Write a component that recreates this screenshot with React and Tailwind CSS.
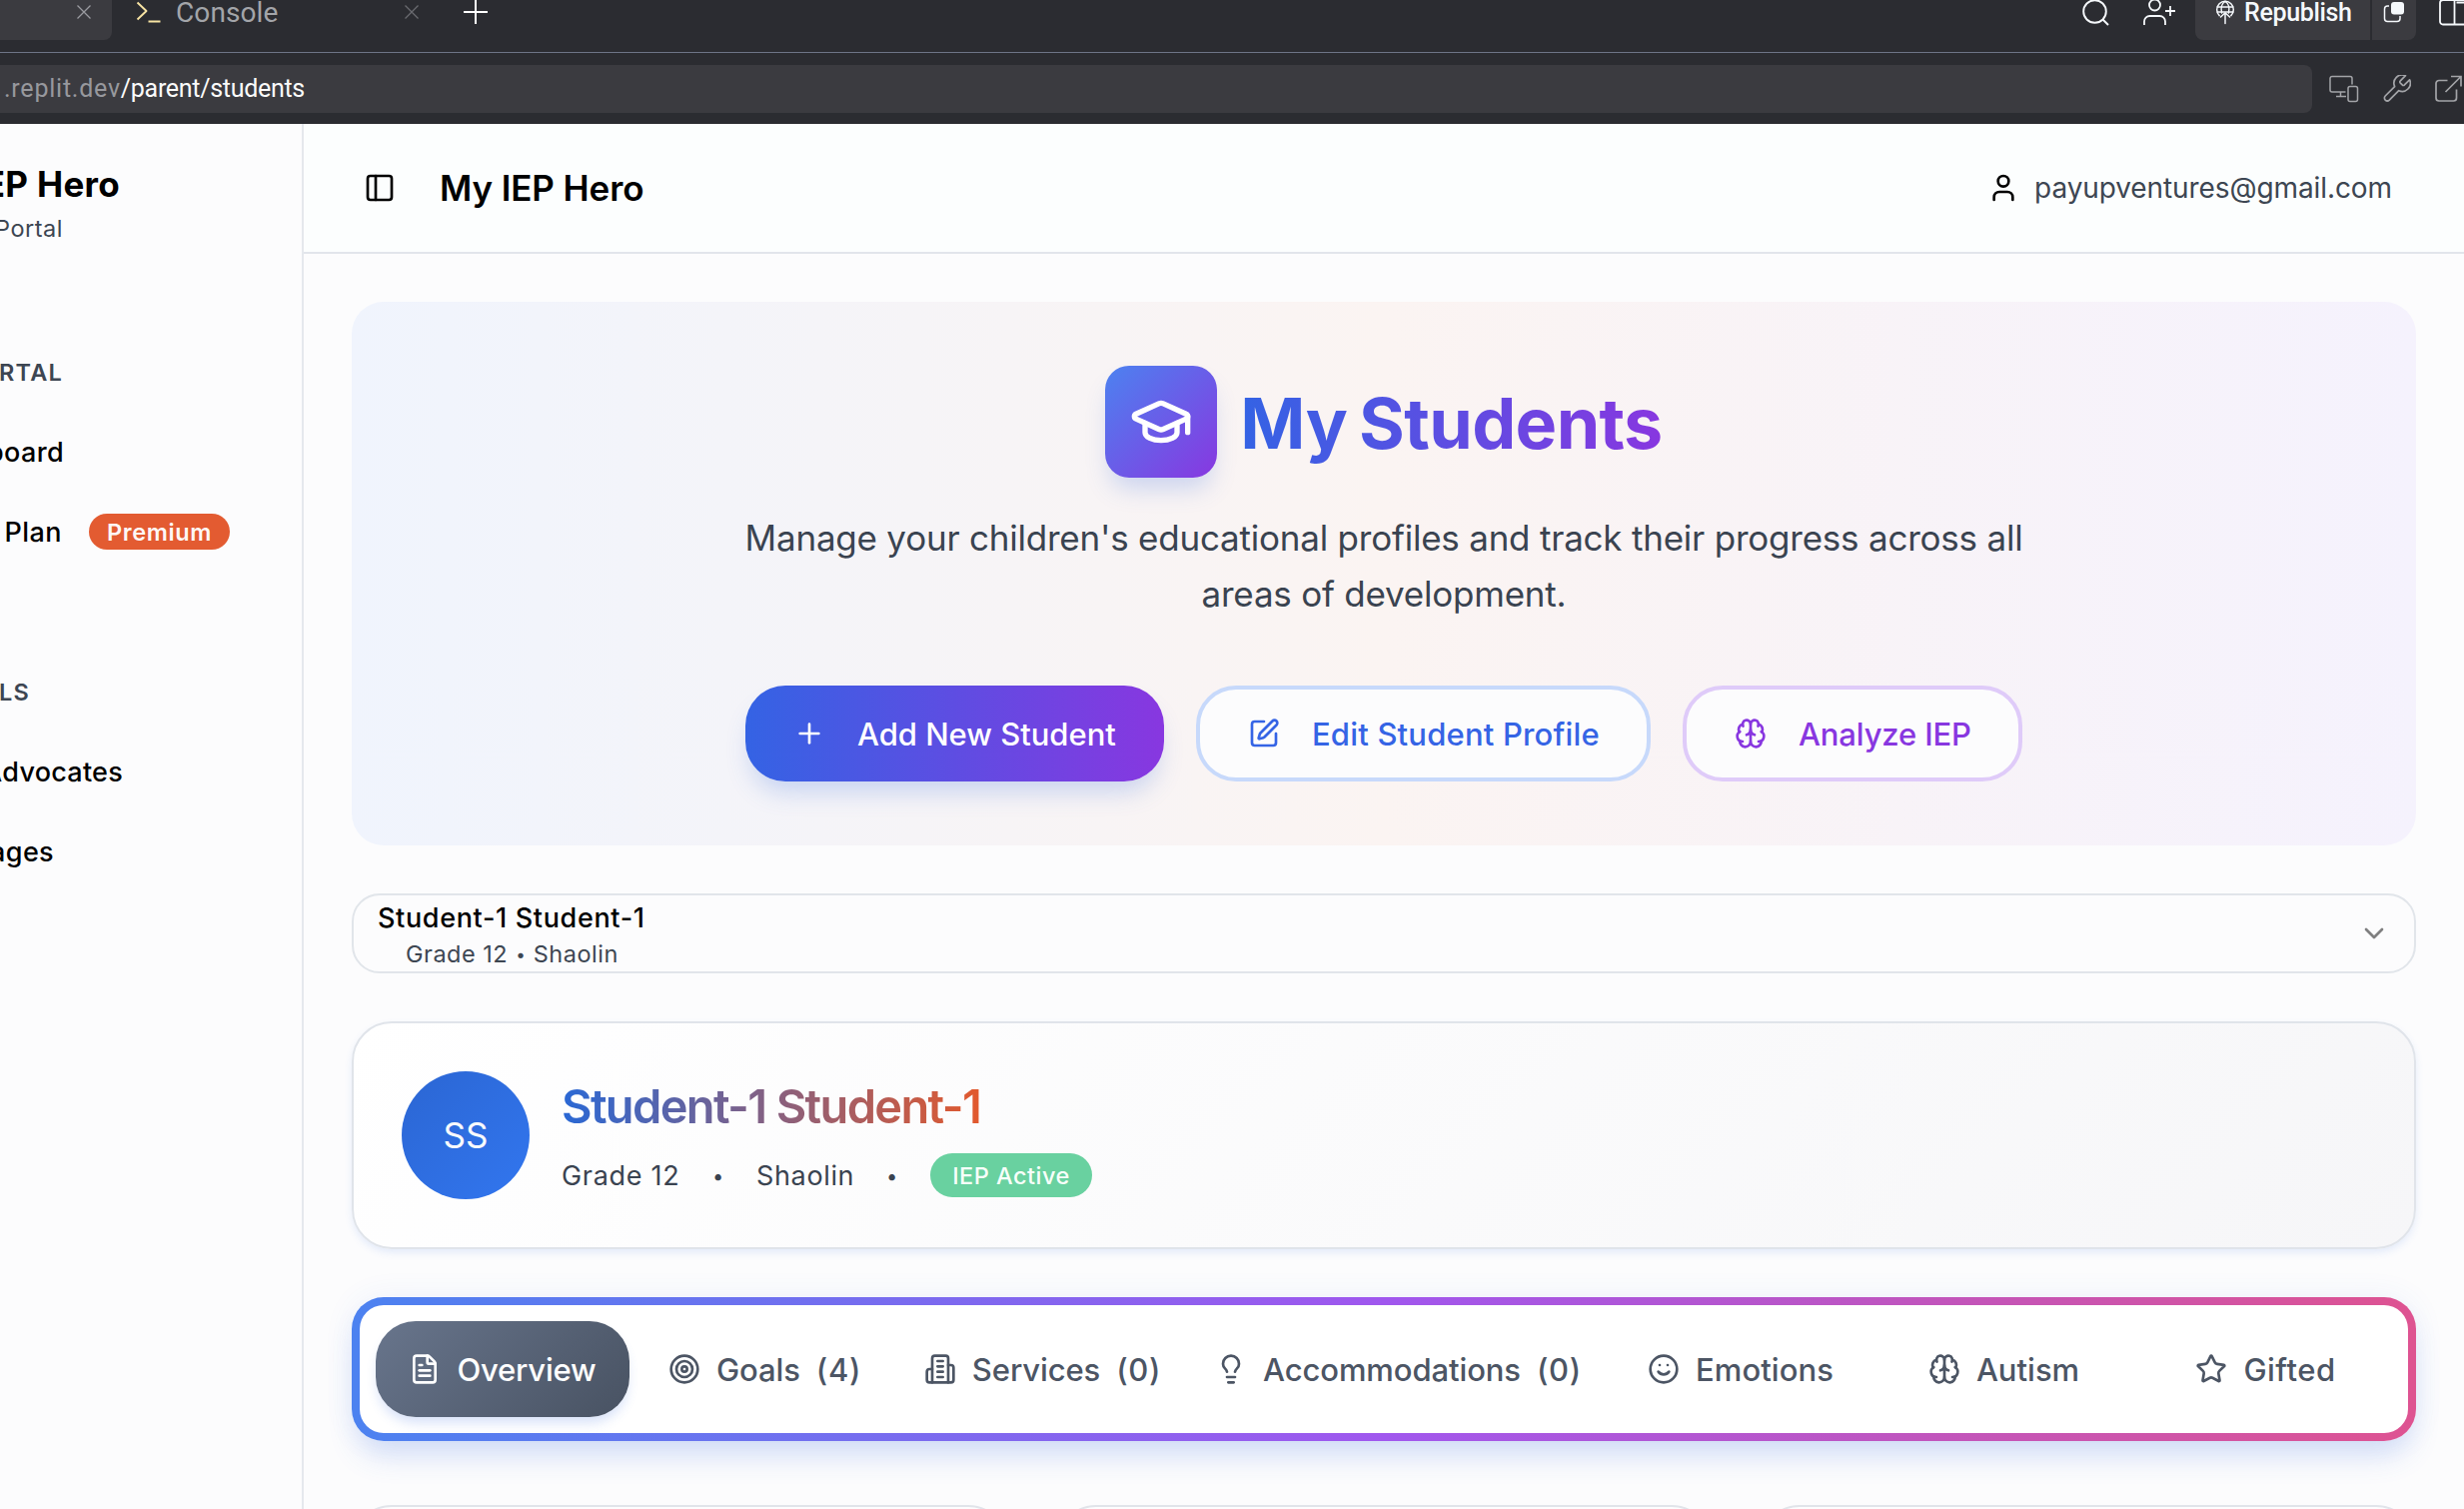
import React from "react";
import {
  Brain,
  Building2,
  ChevronDown,
  FileText,
  GraduationCap,
  Lightbulb,
  PanelLeft,
  Plus,
  Smile,
  SquarePen,
  Star,
  Target,
  User,
} from "lucide-react";

function CloseGlyph({ className }) {
  return (
    <svg className={className} width="16" height="16" viewBox="0 0 16 16" fill="none" stroke="currentColor" strokeWidth="1.3">
      <path d="M1.5 1.5l13 13M14.5 1.5l-13 13" />
    </svg>
  );
}

function PromptGlyph() {
  return (
    <svg className="text-[#f7e3a3]" width="26" height="24" viewBox="0 0 26 24" fill="none" stroke="currentColor" strokeWidth="1.9" strokeLinejoin="round">
      <path d="M1.500 2.500l9 8.500-9 8.500M12.500 21.500h12" />
    </svg>
  );
}

function GlobeUpload() {
  return (
    <svg width="20" height="26" viewBox="0 0 20 26" fill="none" stroke="currentColor" strokeWidth="1.5" strokeLinecap="round" strokeLinejoin="round">
      <path d="M4.2 16.6A8.3 8.3 0 1 1 15.8 16.6" />
      <path d="M2.2 8h15.6M2.2 13h15.6" />
      <path d="M6.6 14C5.4 9.5 6.4 4.500 10 2.300c3.600 2.200 4.600 7.200 3.400 11.700" />
      <path d="M10 14v10.500M5.500 18l4.500-4.200 4.500 4.200" />
    </svg>
  );
}

function DeploymentsGlyph() {
  return (
    <svg width="22" height="22" viewBox="0 0 22 22" fill="none" stroke="currentColor" strokeWidth="1.5">
      <path d="M6 5H4.500A3 3 0 0 0 1.500 8v9.500a3 3 0 0 0 3 3H14a3 3 0 0 0 3-3V15" />
      <rect x="8" y="1" width="13" height="12.500" rx="3" fill="currentColor" stroke="none" />
    </svg>
  );
}

function BrowserTabs() {
  return (
    <div className="h-10 overflow-hidden">
      <div className="-mt-4 flex h-14 items-center">
        <div className="flex h-14 w-28 items-center justify-end rounded-br-lg bg-[#3b3b40] pr-5 text-[#9a9ba0]">
          <CloseGlyph />
        </div>
        <div className="ml-6 flex items-center">
          <PromptGlyph />
          <span className="ml-3.5 pt-px text-[28px] tracking-[0.1px] text-[#a3a5a9]">Console</span>
          <CloseGlyph className="ml-[126px] text-[#6a6b70]" />
        </div>
        <svg className="ml-11 text-white" width="24" height="24" viewBox="0 0 24 24" stroke="currentColor" strokeWidth="2">
          <path d="M12 0v24M0 12h24" />
        </svg>
        <div className="ml-auto flex items-center text-[#f5f8fb]">
          <svg width="28" height="28" viewBox="0 0 28 28" fill="none" stroke="currentColor" strokeWidth="1.9">
            <circle cx="12.500" cy="13.500" r="11.300" />
            <path d="M20.500 21.500l5.500 5.500" />
          </svg>
          <svg className="ml-8" width="34" height="28" viewBox="0 0 34 28" fill="none" stroke="currentColor" strokeWidth="1.8">
            <circle cx="12.500" cy="7" r="5.500" />
            <path d="M2 27v-3.500a5.500 5.500 0 0 1 5.500-5.500h10a5.500 5.500 0 0 1 5.500 5.500V27M23 13h10M28 8v10" />
          </svg>
          <div className="ml-[19px] flex h-14 w-[175px] items-center rounded-bl-lg bg-[#3b3b40] pl-5">
            <GlobeUpload />
            <span className="ml-[9px] pt-0.5 text-[25px] font-medium tracking-[-0.35px]">Republish</span>
          </div>
          <div className="ml-0.5 flex h-14 w-11 items-center justify-center rounded-br-lg bg-[#3b3b40]">
            <DeploymentsGlyph />
          </div>
          <svg className="ml-[23px]" width="25" height="28" viewBox="0 0 25 28" fill="none" stroke="currentColor" strokeWidth="1.8">
            <path d="M30 2H4a3 3 0 0 0-3 3v18.500a3 3 0 0 0 3 3h26M15.500 2v24.500M17.500 4.500h8" />
          </svg>
        </div>
      </div>
    </div>
  );
}

function AddressBar() {
  return (
    <div className="flex h-[71px] items-center">
      <div className="flex h-12 w-[2314px] items-center rounded-r-lg bg-[#3b3b40] pt-px pl-1 text-[25px]">
        <span className="tracking-[0.77px] text-[#97989d]">.replit.dev</span>
        <span className="tracking-[-0.3px] text-[#fafafa]">/parent/students</span>
      </div>
      <div className="ml-[17px] flex items-center gap-6 text-[#a3a4a8]">
        <svg width="30" height="28" viewBox="0 0 30 28" fill="none" stroke="currentColor" strokeWidth="1.5">
          <path d="M23 9.500V3.500a2 2 0 0 0-2-2H3a2 2 0 0 0-2 2V15a2 2 0 0 0 2 2h13.500M11.500 17v4.500M7 21.500h10" />
          <rect x="19" y="11.500" width="9.500" height="15" rx="2" />
        </svg>
        <svg width="28" height="28" viewBox="2 2 20.500 20.500" fill="none" stroke="currentColor" strokeWidth="1.250" strokeLinejoin="round">
          <path d="M14.7 6.3a1 1 0 0 0 0 1.6l1.400 1.400a1 1 0 0 0 1.600 0l3.770-3.770a6 6 0 0 1-7.940 7.940l-6.910 6.910a2.120 2.120 0 0 1-3-3l6.910-6.910a6 6 0 0 1 7.940-7.940l-3.760 3.760z" />
        </svg>
        <svg width="28" height="28" viewBox="0 0 28 28" fill="none" stroke="currentColor" strokeWidth="1.700">
          <path d="M12.500 5.500H4a3 3 0 0 0-3 3V23a3 3 0 0 0 3 3h14.500a3 3 0 0 0 3-3v-8.500M10.500 17L25.500 2M16 1.500h10v10" />
        </svg>
      </div>
    </div>
  );
}

function Clipped({ className, children }) {
  return <div className={`flex items-center justify-end overflow-hidden whitespace-nowrap ${className}`}>{children}</div>;
}

function Sidebar() {
  return (
    <aside className="w-[304px] shrink-0 border-r-2 border-[#e5e8ed] bg-[#fcfcfd] pt-9 text-[27px] font-[480] text-black">
      <Clipped className="h-12 w-[120px] text-[35px] font-[660] tracking-[0.3px]">My IEP Hero</Clipped>
      <Clipped className="mt-[5px] h-8 w-[63px] text-[23.5px] font-[430] tracking-[0.5px] text-[#3d4652]">Parent Portal</Clipped>
      <Clipped className="mt-28 h-8 w-[63px] text-[23.5px] font-[560] tracking-[1.200px] text-[#3d4652]">PARENT PORTAL</Clipped>
      <Clipped className="mt-8 h-16 w-[64px] tracking-[0.35px]">Dashboard</Clipped>
      <div className="mt-4 flex h-16 items-center">
        <Clipped className="w-[62px] tracking-[0.45px]">My Plan</Clipped>
        <span className="-mt-0.5 ml-[27px] flex h-9 w-[141px] items-center justify-center rounded-full bg-[#e35b31] pt-px text-[23.500px] font-[580] tracking-[0.6px] text-[#fdf8f6]">Premium</span>
      </div>
      <Clipped className="mt-28 h-8 w-[30px] text-[23.500px] font-[560] tracking-[1.200px] text-[#3d4652]">TOOLS</Clipped>
      <Clipped className="mt-8 h-16 w-[123px] tracking-[0.25px]">Find Advocates</Clipped>
      <Clipped className="mt-4 h-16 w-[54px] tracking-[0.35px]">Messages</Clipped>
    </aside>
  );
}

function Header() {
  return (
    <header className="flex h-[130px] items-center border-b-2 border-[#e2e5eb] bg-[#fcfefe] pr-[72px] pl-[60px]">
      <PanelLeft size={32} className="text-black" />
      <h1 className="ml-[44px] pt-px text-[35px] font-[560] tracking-[-0.1px] text-black">My IEP Hero</h1>
      <div className="ml-auto flex items-center">
        <User size={32} className="text-black" />
        <span className="ml-[15px] text-[28px] font-[430] tracking-[-0.09px] text-[#3d4652]">payupventures@gmail.com</span>
      </div>
    </header>
  );
}

function Hero() {
  return (
    <section className="flex h-[544px] flex-col items-center rounded-[32px] bg-[linear-gradient(to_right,#f0f4fd,#fbf4f2,#f5f2fd)] pt-16">
      <div className="flex h-28 items-center gap-[23px]">
        <div className="flex size-28 items-center justify-center rounded-3xl bg-[linear-gradient(135deg,#4c82f0,#8837e0)] shadow-[0_16px_24px_-6px_rgba(60,110,225,0.25)]">
          <GraduationCap size={64} className="text-white" />
        </div>
        <h2 className="bg-[linear-gradient(to_right,#3463e4,#8837e0)] bg-clip-text pt-1 text-[70px] leading-[96px] font-bold tracking-[-0.65px] text-transparent [word-spacing:-4px]">My Students</h2>
      </div>
      <p className="mt-8 text-center text-[35px] leading-[56px] font-[430] tracking-[-0.22px] whitespace-nowrap text-[#3a4350]">
        Manage your children's educational profiles and track their progress across all
        <br />
        areas of development.
      </p>
      <div className="mt-16 flex gap-8 text-[31px] font-[460] whitespace-nowrap">
        <button className="flex h-24 w-[419px] items-center gap-8 rounded-[40px] bg-[linear-gradient(to_right,#3463e4,#8837e0)] pl-12 text-white shadow-[0_16px_24px_-6px_rgba(60,110,225,0.25)]">
          <Plus size={32} className="shrink-0" />
          <span className="pt-0.5 tracking-[-0.03px]">Add New Student</span>
        </button>
        <button className="flex h-24 w-[455px] items-center gap-[31px] rounded-[40px] border-4 border-[#c7d9fb] bg-[#fcfcfd] pl-12 text-[#3564e5]">
          <SquarePen size={32} className="shrink-0" />
          <span className="ml-px pt-0.5 tracking-[0.18px]">Edit Student Profile</span>
        </button>
        <button className="flex h-24 w-[340px] items-center gap-8 rounded-[40px] border-4 border-[#dfcbf9] bg-[#fcfcfd] pl-12 text-[#8837e0]">
          <Brain size={32} className="shrink-0" />
          <span className="pt-0.5 tracking-[-0.150px]">Analyze IEP</span>
        </button>
      </div>
    </section>
  );
}

function StudentSelect() {
  return (
    <div className="mt-12 flex h-20 items-center justify-between rounded-[28px] border-2 border-[#e1e5ea] px-6">
      <div className="pt-0.5">
        <div className="text-[27px] leading-10 font-[470] tracking-[0.65px] text-black">Student-1 Student-1</div>
        <div className="ml-7 flex gap-2 text-[23.500px] leading-8 font-[430] text-[#3d4652]">
          <span className="tracking-[0.5px]">Grade 12</span>
          <span className="text-[17px]">•</span>
          <span className="tracking-[0.5px]">Shaolin</span>
        </div>
      </div>
      <ChevronDown size={32} className="text-[#7f7f80]" />
    </div>
  );
}

function StudentCard() {
  return (
    <section className="mt-12 flex h-[228px] items-center gap-8 rounded-[40px] border-2 border-[#e0e4ea] bg-[linear-gradient(135deg,#ffffff,#f6f6f8)] pl-12 whitespace-nowrap shadow-[0_4px_8px_-1px_rgba(60,110,225,0.14)]">
      <div className="flex size-32 items-center justify-center rounded-full bg-[linear-gradient(135deg,#2b66d3,#3276ef)] pt-px text-[35px] text-[#f8fafc]">SS</div>
      <div className="flex flex-col items-start gap-4">
        <h3 className="bg-[linear-gradient(to_right,#2a68d5,#e2592d)] bg-clip-text pt-0.5 text-[47px] leading-[62px] font-semibold tracking-[-1.65px] text-transparent">Student-1 Student-1</h3>
        <div className="flex h-11 items-center text-[27px] font-[430] text-[#3a4350]">
          <span className="w-[118px] pt-0.5 tracking-[0.7px]">Grade 12</span>
          <span className="ml-8 w-[13px] pt-0.5 text-center text-[20px]">•</span>
          <span className="ml-8 w-[98px] pt-0.5 tracking-[0.650px]">Shaolin</span>
          <span className="ml-[31px] w-[13px] pt-0.5 text-center text-[20px]">•</span>
          <span className="ml-8 flex h-11 w-[162px] items-center justify-center rounded-full bg-[#69d1a0] pt-px text-[23.500px] font-medium tracking-[0.5px] text-[#f7fffa]">IEP Active</span>
        </div>
      </div>
    </section>
  );
}

const TABS = [
  { icon: FileText, label: "Overview", width: "w-[254px]", tracking: "tracking-[-0.2px]", active: true },
  { icon: Target, label: "Goals", count: "(4)", width: "w-[271px]", tracking: "tracking-[-0.1px]" },
  { icon: Building2, label: "Services", count: "(0)", width: "w-[285px]", tracking: "tracking-[-0.1px]" },
  { icon: Lightbulb, label: "Accommodations", count: "(0)", width: "w-[427px]", tracking: "tracking-[-0.1px]" },
  { icon: Smile, label: "Emotions", width: "w-[258px]", tracking: "tracking-[0.05px]" },
  { icon: Brain, label: "Autism", width: "w-[269px]", tracking: "tracking-[0px]" },
  { icon: Star, label: "Gifted", width: "w-[255px]", tracking: "tracking-[0.5px]" },
];

function ServicesGlyph() {
  return (
    <svg width="32" height="32" viewBox="0 0 24 24" fill="none" stroke="currentColor" strokeWidth="2" strokeLinecap="round" strokeLinejoin="round">
      <path d="M6 22V4a2 2 0 0 1 2-2h8a2 2 0 0 1 2 2v18Z" />
      <path d="M6 12H4a2 2 0 0 0-2 2v6a2 2 0 0 0 2 2h2M18 9h2a2 2 0 0 1 2 2v9a2 2 0 0 1-2 2h-2" />
      <path d="M10 6h4M10 10h4M10 14h4M10 18h4" />
    </svg>
  );
}

function Tab({ icon: Icon, label, count, width, tracking, active }) {
  const look = active
    ? "rounded-[40px] bg-[linear-gradient(135deg,#68758c,#485262)] text-white shadow-[0_8px_12px_-2px_rgba(60,110,225,0.2)]"
    : "text-[#4c5564]";
  return (
    <div className={`flex h-24 shrink-0 items-center justify-center ${width} ${look}`}>
      {Icon === Building2 ? <ServicesGlyph /> : <Icon size={32} className="shrink-0" />}
      <span className={`ml-4 pt-0.5 ${tracking}`}>{label}</span>
      {count && <span className="ml-4 pt-0.5 tracking-[0.7px]">{count}</span>}
    </div>
  );
}

function TabBar() {
  return (
    <nav className="mt-12 h-36 rounded-[32px] bg-[linear-gradient(to_right,#4c82f0,#a057ee,#de5391)] p-2 shadow-[0_20px_30px_-6px_rgba(60,110,225,0.2),0_0_30px_rgba(60,110,225,0.08)]">
      <div className="flex h-32 items-center rounded-3xl bg-white px-4 text-[31px] font-[460] whitespace-nowrap">
        {TABS.map((tab) => (
          <Tab key={tab.label} {...tab} />
        ))}
      </div>
    </nav>
  );
}

function SummaryCards() {
  return (
    <div className="mt-16 grid grid-cols-3 gap-12">
      {[0, 1, 2].map((n) => (
        <div key={n} className="h-60 rounded-[40px] border-2 border-[#e1e4ea] bg-[#fdfdfe]" />
      ))}
    </div>
  );
}

export default function App() {
  return (
    <div className="flex h-[1510px] w-[2466px] flex-col overflow-hidden bg-[#fcfcfd] font-[Inter,'Liberation_Sans',sans-serif]">
      <div className="h-[124px] shrink-0 bg-[#2b2c31] font-[Roboto,sans-serif] whitespace-nowrap">
        <BrowserTabs />
        <div className="mt-3 h-px bg-[#6d7486]" />
        <AddressBar />
      </div>
      <div className="flex min-h-0 flex-1">
        <Sidebar />
        <div className="flex min-w-0 flex-1 flex-col">
          <Header />
          <main className="min-h-0 flex-1 overflow-hidden px-12 pt-12">
            <Hero />
            <StudentSelect />
            <StudentCard />
            <TabBar />
            <SummaryCards />
          </main>
        </div>
      </div>
    </div>
  );
}
